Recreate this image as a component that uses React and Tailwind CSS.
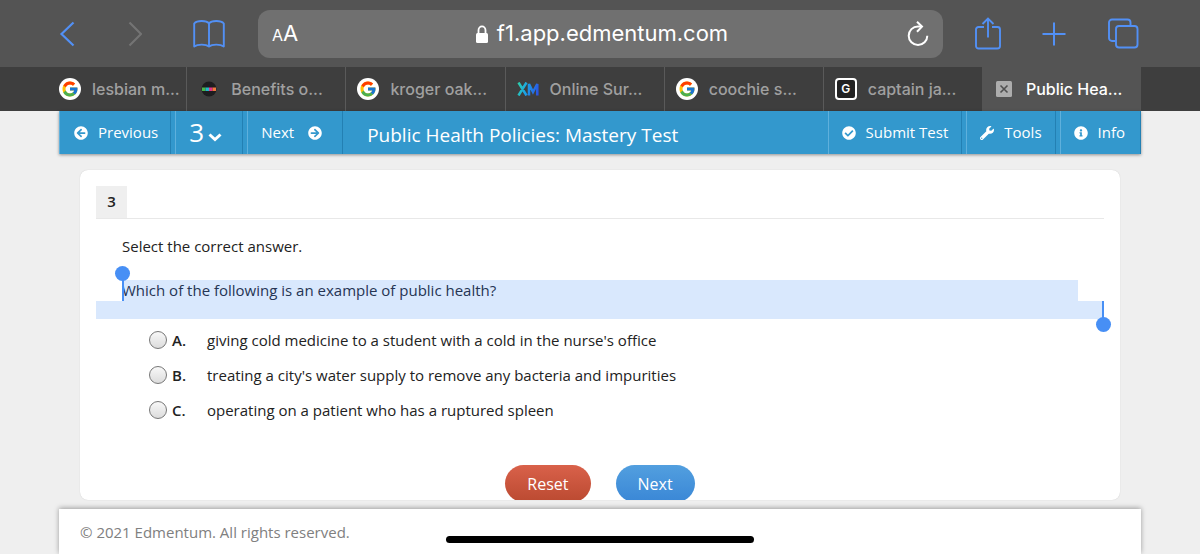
import React, { useState } from 'react';
import {
  FaArrowCircleLeft,
  FaArrowCircleRight,
  FaCheckCircle,
  FaInfoCircle,
  FaWrench,
} from 'react-icons/fa';
import { FcGoogle } from 'react-icons/fc';

const tabs = [
  { icon: 'google', title: 'lesbian m...' },
  { icon: 'benefits', title: 'Benefits o...' },
  { icon: 'google', title: 'kroger oak...' },
  { icon: 'xm', title: 'Online Sur...' },
  { icon: 'google', title: 'coochie s...' },
  { icon: 'letter', title: 'captain ja...' },
  { icon: 'close', title: 'Public Hea...', active: true },
];

const answers = [
  { letter: 'A.', text: "giving cold medicine to a student with a cold in the nurse's office" },
  { letter: 'B.', text: "treating a city's water supply to remove any bacteria and impurities" },
  { letter: 'C.', text: 'operating on a patient who has a ruptured spleen' },
];

// --- Favicons ---

const GoogleIcon = () => (
  <span className="flex w-[22px] h-[22px] items-center justify-center rounded-full bg-white">
    <FcGoogle className="w-[18px] h-[18px]" />
  </span>
);

const BenefitsIcon = () => (
  <svg viewBox="0 0 22 22" className="w-[22px] h-[22px]">
    <circle cx="11" cy="11" r="7.5" fill="#1d1d1f" />
    <rect x="4" y="9.5" width="3.5" height="3.5" fill="#4bb748" />
    <rect x="7.5" y="9.5" width="3.5" height="3.5" fill="#25b7c8" />
    <rect x="11" y="9.5" width="3.5" height="3.5" fill="#e0348b" />
    <rect x="14.5" y="9.5" width="3.5" height="3.5" fill="#f07a3c" />
  </svg>
);

const XmIcon = () => (
  <svg viewBox="0 0 22 14" className="w-[22px] h-[14px]" fill="none">
    <defs>
      <linearGradient id="xm" gradientUnits="userSpaceOnUse" x1="0" y1="0" x2="22" y2="6">
        <stop offset="0" stopColor="#2fd6a0" />
        <stop offset="0.45" stopColor="#1ba4e6" />
        <stop offset="1" stopColor="#2a55e5" />
      </linearGradient>
    </defs>
    <path
      d="M1.500 0.500l8 13M9.500 0.500l-8 13M12 13.500V2l4 8 4.300-8v11.500"
      stroke="url(#xm)"
      strokeWidth="2.500"
    />
  </svg>
);

const TabIcon = ({ icon }) => {
  if (icon === 'google') return <GoogleIcon />;
  if (icon === 'benefits') return <BenefitsIcon />;
  if (icon === 'xm') return <XmIcon />;
  if (icon === 'letter') {
    return (
      <span className="flex w-[22px] h-[22px] items-center justify-center rounded border-2 border-white bg-[#222] text-xs font-semibold text-white">
        G
      </span>
    );
  }
  return (
    <button type="button" aria-label="Close tab" className="flex w-[22px] justify-center">
      <svg viewBox="0 0 16 16" className="w-4 h-4">
        <rect width="16" height="16" rx="1.5" fill="#adadad" />
        <path d="M4.5 4.5l7 7M11.5 4.5l-7 7" stroke="#505050" strokeWidth="1.6" />
      </svg>
    </button>
  );
};

// --- Browser chrome ---

const ChromeButton = ({ label, width, children }) => (
  <button type="button" aria-label={label} className={`shrink-0 ${width}`}>
    {children}
  </button>
);

const BrowserBar = () => (
  <div className="flex h-[67px] items-center bg-[#545454] pl-[59px] pr-[61px] text-[#5290f5]">
    <div className="flex items-center gap-[51px] pr-[31px]">
      <ChromeButton label="Back" width="w-4">
        <svg viewBox="0 0 16 26" className="w-4 h-[26px]" fill="none" stroke="currentColor" strokeWidth="2.2">
          <path d="M14.5 1.5L2.5 13l12 11.5" />
        </svg>
      </ChromeButton>
      <ChromeButton label="Forward" width="w-4">
        <svg viewBox="0 0 16 26" className="w-4 h-[26px]" fill="none" stroke="#747474" strokeWidth="2.2">
          <path d="M3.5 1.5L15 13L3.5 24.5" />
        </svg>
      </ChromeButton>
      <ChromeButton label="Bookmarks" width="w-[34px]">
        <svg viewBox="0 0 34 30" className="w-[34px] h-[30px]" fill="none" stroke="currentColor" strokeWidth="1.9" strokeLinejoin="round">
          <path d="M16 4.500C13.500 1.200 4 1.200 1.200 4.500V27.500C4.500 25 13 25 16 27.500C19 25 27.500 25 30.800 27.500V4.500C28 1.200 18.500 1.200 16 4.500V27.500" />
        </svg>
      </ChromeButton>
    </div>

    <div className="flex h-12 min-w-0 flex-1 items-center rounded-xl bg-[#707070] px-[14px] text-white">
      <button type="button" aria-label="Text size" className="flex w-8 items-baseline">
        <span className="text-base">A</span>
        <span className="text-[22px]">A</span>
      </button>
      <div className="flex min-w-0 flex-1 items-center justify-center gap-2 pr-2">
        <svg viewBox="0 0 14 18" className="w-[14px] h-[18px]">
          <rect x="1" y="8" width="12" height="10" rx="1.5" fill="currentColor" />
          <path d="M3.5 9V5.2a3.5 3.8 0 0 1 7 0V9" fill="none" stroke="currentColor" strokeWidth="1.8" />
        </svg>
        <span className="text-[22px]">f1.app.edmentum.com</span>
      </div>
      <button type="button" aria-label="Reload">
        <svg viewBox="0 0 22 26" className="w-[22px] h-[26px]" fill="none" stroke="currentColor" strokeWidth="2">
          <path d="M15 5.400H11A9.300 9.300 0 1 0 20.300 14.700" />
          <path d="M10 0.800L15 5.600L10 10.800" />
        </svg>
      </button>
    </div>

    <div className="flex items-center gap-10 pl-8">
      <ChromeButton label="Share" width="w-[26px]">
        <svg viewBox="0 0 26 34" className="w-[26px] h-[34px]" fill="none" stroke="currentColor" strokeWidth="1.9">
          <path d="M9 10H3.5A2.500 2.500 0 0 0 1 12.500V29a2.500 2.500 0 0 0 2.500 2.500h19A2.500 2.500 0 0 0 25 29V12.500A2.500 2.500 0 0 0 22.500 10H17" />
          <path d="M13 20.500V1.500M7.500 7L13 1.500l5.500 5.500" />
        </svg>
      </ChromeButton>
      <ChromeButton label="New tab" width="w-[26px]">
        <svg viewBox="0 0 26 26" className="w-[26px] h-[26px]" fill="none" stroke="currentColor" strokeWidth="2">
          <path d="M13 1.5v23M1.5 13h23" />
        </svg>
      </ChromeButton>
      <ChromeButton label="Show tabs" width="w-8">
        <svg viewBox="0 0 32 32" className="w-8 h-8" fill="none" stroke="currentColor" strokeWidth="1.9">
          <rect x="9" y="8" width="21.5" height="21.5" rx="3" />
          <path d="M8.500 23H5a3 3 0 0 1-3-3V4.500a3 3 0 0 1 3-3h15.500a3 3 0 0 1 3 3v3" />
        </svg>
      </ChromeButton>
    </div>
  </div>
);

const TabBar = () => (
  <div className="grid h-11 grid-cols-[4fr_repeat(6,5fr)] bg-[#3e3e3e] px-[59px]">
    {tabs.map((tab, index) => (
      <div
        key={tab.title}
        className={`flex min-w-0 items-center gap-[11px] whitespace-nowrap text-base font-medium ${
          index > 0 ? 'pl-[11px]' : ''
        } ${tab.active ? 'bg-[#545454] text-white' : 'text-[#a0a0a0]'} ${
          index > 0 && !tab.active ? 'border-l border-[#5a5a5a]' : ''
        }`}
      >
        <span className="flex shrink-0 items-center">
          <TabIcon icon={tab.icon} />
        </span>
        <span>{tab.title}</span>
      </div>
    ))}
  </div>
);

// --- Test player ---

const navItem =
  'flex items-center border-l border-r border-l-[#5fb0dc] border-r-[#2380b3] text-[15px]';

const TestNav = () => (
  <nav className="flex h-[43px] bg-[#3398cd] text-white shadow-[0_1px_3px_rgba(0,0,0,0.4)]">
    <div className="flex gap-1">
      <button type="button" className={`${navItem} gap-[10px] pl-[14px] pr-3`}>
        <FaArrowCircleLeft className="w-[14px] h-[14px]" />
        Previous
      </button>
      <div className={`${navItem} gap-1 pl-[13px] pr-5`}>
        <select
          aria-label="Question"
          defaultValue="3"
          className="appearance-none bg-transparent text-[26px] text-white"
        >
          <option>1</option>
          <option>2</option>
          <option>3</option>
          <option>4</option>
        </select>
        <svg viewBox="0 0 14 14" className="mt-2 w-[14px] h-[14px]" fill="none" stroke="currentColor" strokeWidth="3">
          <path d="M1.5 4.500L7 9.500L12.500 4.500" />
        </svg>
      </div>
      <button type="button" className={`${navItem} gap-[14px] pl-[13px] pr-5`}>
        Next
        <FaArrowCircleRight className="w-[14px] h-[14px]" />
      </button>
    </div>
    <h1 className="flex flex-1 items-center pl-6 pt-[6px] text-[19px]">
      Public Health Policies: Mastery Test
    </h1>
    <div className="flex gap-1">
      <button type="button" className={`${navItem} gap-[10px] px-[13px]`}>
        <FaCheckCircle className="w-[14px] h-[14px]" />
        Submit Test
      </button>
      <button type="button" className={`${navItem} gap-[10px] px-[13px]`}>
        <FaWrench className="w-[14px] h-[14px]" />
        Tools
      </button>
      <button type="button" className={`${navItem} gap-[10px] pl-[13px] pr-[15px]`}>
        <FaInfoCircle className="w-[14px] h-[14px]" />
        Info
      </button>
    </div>
  </nav>
);

const QuestionCard = () => {
  const [selected, setSelected] = useState(null);

  return (
    <form
      className="mx-[21px] mt-4 overflow-hidden rounded-lg bg-white px-4 pt-4 text-[15px] text-[#222] shadow-[0_0_1px_rgba(0,0,0,0.2)]"
      onSubmit={(e) => e.preventDefault()}
    >
      <div className="flex border-b border-[#e8e8e8]">
        <span className="flex h-8 w-[31px] items-center justify-center bg-[#efefef] pb-[2px] font-semibold">
          3
        </span>
      </div>

      <p className="mt-[15px] px-[26px] leading-6">Select the correct answer.</p>

      {/* Highlighted question with its two selection handles */}
      <div className="relative mt-[22px] text-[#263554]">
        <p className="mx-[26px] bg-[#d9e8fd] leading-[21px]">
          Which of the following is an example of public health?
        </p>
        <div className="h-[18px] bg-[#d9e8fd]" />
        <span className="absolute left-[26px] top-0 h-[21px] w-[2px] bg-[#478ff5]" />
        <span className="absolute left-[19px] -top-[14px] h-[15px] w-[15px] rounded-full bg-[#478ff5]" />
        <span className="absolute right-0 bottom-0 h-[18px] w-[2px] bg-[#478ff5]" />
        <span className="absolute -right-[7px] -bottom-[13px] h-[15px] w-[15px] rounded-full bg-[#478ff5]" />
      </div>

      <div className="mt-1 pl-[53px]">
        {answers.map((answer) => (
          <label key={answer.letter} className="flex h-[35px] items-center">
            <input
              type="radio"
              name="answer"
              checked={selected === answer.letter}
              onChange={() => setSelected(answer.letter)}
              className="mb-[2px] h-[18px] w-[18px] appearance-none rounded-full border border-[#777] bg-linear-to-b from-[#f8f8f8] to-[#dcdcdc] checked:border-[5px]"
            />
            <span className="w-10 pl-[5px] font-semibold">{answer.letter}</span>
            <span>{answer.text}</span>
          </label>
        ))}
      </div>

      <div className="-mb-[2px] mt-[37px] flex justify-center gap-[25px] text-base text-white [text-shadow:0_1px_2px_rgba(0,0,0,0.6)]">
        <button
          type="reset"
          onClick={() => setSelected(null)}
          className="h-[37px] rounded-full bg-linear-to-b from-[#d9614a] to-[#bb4a31] px-[22px]"
        >
          Reset
        </button>
        <button
          type="submit"
          className="h-[37px] rounded-full bg-linear-to-b from-[#529fdf] to-[#3a87d6] px-[22px]"
        >
          Next
        </button>
      </div>
    </form>
  );
};

const App = () => (
  <div className="relative flex min-h-screen flex-col bg-[#efefef] font-['Inter',sans-serif]">
    <BrowserBar />
    <TabBar />
    <div className="mx-[59px] flex flex-1 flex-col font-['Open_Sans',sans-serif]">
      <TestNav />
      <main>
        <QuestionCard />
      </main>
      <footer className="mt-[9px] flex flex-1 items-center bg-white px-[21px] pt-[2px] text-[15px] text-[#808080] shadow-[0_-1px_5px_rgba(0,0,0,0.35)]">
        © 2021 Edmentum. All rights reserved.
      </footer>
    </div>
    {/* Home indicator */}
    <div className="absolute inset-x-0 bottom-[11px] flex justify-center">
      <div className="h-[7px] w-[308px] rounded-full bg-black" />
    </div>
  </div>
);

export default App;
